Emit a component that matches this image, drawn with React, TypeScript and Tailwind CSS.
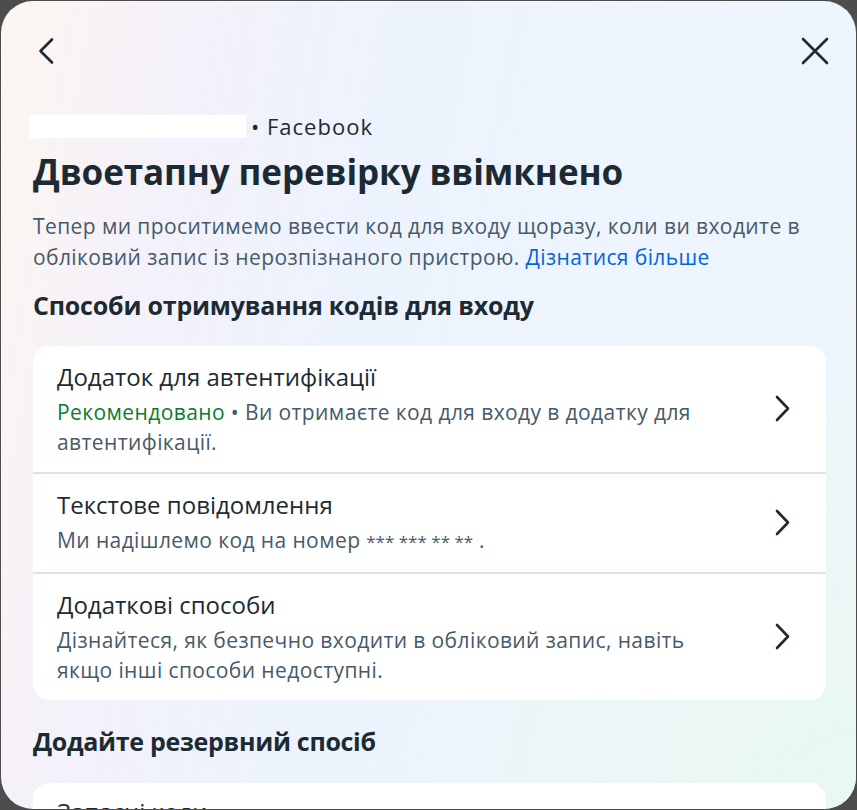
import React from "react";

const Chevron: React.FC = () => (
  <svg width="20" height="28" viewBox="0 0 20 28" fill="none" className="shrink-0">
    <path d="M4 2 L15 13.5 L4 25" stroke="#1c2b33" strokeWidth="2.6" strokeLinecap="round" strokeLinejoin="round" />
  </svg>
);

type Row = { title: string; body: React.ReactNode };

const rows: Row[] = [
  {
    title: "Додаток для автентифікації",
    body: (
      <>
        <span className="text-[#0a7c2f]">Рекомендовано</span> • Ви отримаєте код для входу в додатку для
        автентифікації.
      </>
    ),
  },
  {
    title: "Текстове повідомлення",
    body: (
      <>
        Ми надішлемо код на номер <span className="text-[17px] tracking-[0px]">*** *** ** **</span> .
      </>
    ),
  },
  {
    title: "Додаткові способи",
    body: "Дізнайтеся, як безпечно входити в обліковий запис, навіть якщо інші способи недоступні.",
  },
];

export default function App() {
  return (
    <div className="w-[857px] h-[810px] bg-[#4d4d4d] p-[1px] overflow-hidden font-['Open_Sans',sans-serif]">
      <div className="h-full rounded-[32px] overflow-hidden bg-[linear-gradient(100deg,#fdf6f1_0%,#f4f1f9_18%,#edf3fd_40%,#eef5fd_75%,#edf6fb_100%)] relative">
        <div className="absolute inset-0 bg-[radial-gradient(ellipse_at_100%_100%,#e9f8f1_0%,rgba(233,248,241,0)_45%)]" />
        <div className="relative px-8">
          {/* top bar */}
          <div className="flex justify-between items-center h-[100px]">
            <svg width="24" height="28" viewBox="0 0 24 28" fill="none" className="ml-[2px]">
              <path d="M17 2.5 L5.5 14 L17 25.5" stroke="#1c2b33" strokeWidth="2.6" strokeLinecap="round" strokeLinejoin="round" />
            </svg>
            <svg width="30" height="30" viewBox="0 0 30 30" fill="none" className="mr-[-6px]">
              <path d="M3 3 L27 27 M27 3 L3 27" stroke="#1c2b33" strokeWidth="2.6" strokeLinecap="round" />
            </svg>
          </div>

          <div className="flex items-center gap-[5px] mt-[13px] text-[22px] tracking-[1px] text-[#1c2b33] leading-[24px]">
            <div className="w-[217px] h-[23px] bg-white ml-[-4px]" />
            <span>• Facebook</span>
          </div>

          <h1 className="mt-[12px] text-[35px] font-bold text-[#1c2b33] leading-[44px] tracking-[-0.1px]">
            Двоетапну перевірку ввімкнено
          </h1>

          <p className="mt-[17px] text-[21px] leading-[31px] tracking-[0.4px] text-[#465a69]">
            Тепер ми проситимемо ввести код для входу щоразу, коли ви входите в обліковий запис із нерозпізнаного
            пристрою. <span className="text-[#0064e0]">Дізнатися більше</span>
          </p>

          <h2 className="mt-[15px] text-[25px] font-bold text-[#1c2b33] leading-[34px] tracking-[-0.2px]">
            Способи отримування кодів для входу
          </h2>

          <div className="mt-[24px] bg-white rounded-[16px] overflow-hidden mr-[-2px]">
            {rows.map((r, i) => (
              <div
                key={r.title}
                className={`flex items-center pl-6 pr-[33px] pt-[14px] pb-[15px] ${i > 0 ? "border-t-2 border-[#dde3e8]" : ""}`}
              >
                <div className="flex-1">
                  <div className="w-[657px]">
                    <div className="text-[24px] leading-[34px] text-[#1c2b33]">{r.title}</div>
                    <div className="mt-[3px] text-[21px] leading-[30px] tracking-[0.4px] text-[#465a69]">{r.body}</div>
                  </div>
                </div>
                <Chevron />
              </div>
            ))}
          </div>

          <h2 className="mt-[24px] text-[25px] font-bold text-[#1c2b33] leading-[34px] tracking-[-0.3px]">
            Додайте резервний спосіб
          </h2>

          <div className="mt-[25px] bg-white rounded-[16px] mr-[-2px] pl-6 pt-[12px] pb-6">
            <div className="text-[24px] leading-[34px] text-[#1c2b33]">Запасні коди</div>
          </div>
        </div>
      </div>
    </div>
  );
}
